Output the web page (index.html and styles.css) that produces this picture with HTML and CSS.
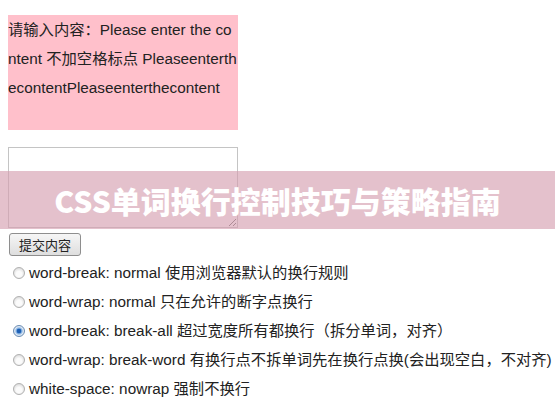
FILE: index.html
```html
<!DOCTYPE html>
<html lang="zh-CN">
<head>
<meta charset="utf-8">
<title>CSS单词换行控制技巧与策略指南</title>
<link rel="stylesheet" href="styles.css">
</head>
<body>
<div class="page">
  <div class="content-box">请输入内容：Please enter the content 不加空格标点 PleaseenterthecontentPleaseenterthecontent</div>
  <textarea class="input-area"></textarea>
  <div class="actions">
    <button class="submit-btn" type="button">提交内容</button>
  </div>
  <ul class="options">
    <li><label><input type="radio" name="wrap" class="radio"> word-break: normal 使用浏览器默认的换行规则</label></li>
    <li><label><input type="radio" name="wrap" class="radio"> word-wrap: normal 只在允许的断字点换行</label></li>
    <li><label><input type="radio" name="wrap" class="radio" checked> word-break: break-all 超过宽度所有都换行（拆分单词，对齐）</label></li>
    <li><label><input type="radio" name="wrap" class="radio"> word-wrap: break-word 有换行点不拆单词先在换行点换(会出现空白，不对齐)</label></li>
    <li><label><input type="radio" name="wrap" class="radio"> white-space: nowrap 强制不换行</label></li>
  </ul>
</div>
<div class="title-banner">CSS单词换行控制技巧与策略指南</div>
</body>
</html>
```

FILE: styles.css
```css
html, body {
  margin: 0;
  padding: 0;
  background: #fff;
}

body {
  font-family: "Liberation Sans", Arial, "Noto Sans CJK TC", sans-serif;
  font-size: 15.3px;
  color: #222;
  overflow: hidden;
}

.page {
  padding: 15px 8px 0 8px;
}

.content-box {
  width: 230px;
  height: 115px;
  background: #ffc0cb;
  line-height: 29px;
  word-break: break-all;
  overflow: hidden;
}

.input-area {
  display: block;
  box-sizing: border-box;
  width: 230px;
  height: 81px;
  margin: 17px 0 0 0;
  border: 1px solid #c4c4c4;
  padding: 2px;
  resize: both;
  font: inherit;
}

.actions {
  margin-top: 5px;
}

.submit-btn {
  box-sizing: border-box;
  width: 72px;
  height: 23px;
  margin-left: 1px;
  padding: 0;
  border: 1px solid #8e8e8e;
  border-radius: 3px;
  background: linear-gradient(#f6f6f6, #dedede);
  font-family: "Noto Sans CJK SC", sans-serif;
  font-size: 13px;
  color: #222;
  line-height: 20px;
}

.options {
  list-style: none;
  margin: 2px 0 0 0;
  padding: 0;
}

.options li {
  height: 29px;
  line-height: 29px;
  white-space: nowrap;
}

.options label {
  display: flex;
  align-items: center;
}

.radio {
  appearance: none;
  -webkit-appearance: none;
  box-sizing: border-box;
  width: 12px;
  height: 12px;
  margin: 0 4px 0 5px;
  border: 1px solid #b0b0b0;
  border-radius: 50%;
  background: radial-gradient(circle at 50% 60%, #fbfbfb 0 35%, #dedede 75%);
  flex: none;
}

.radio:checked {
  border-color: #6a8cb2;
  background: radial-gradient(circle at 50% 50%, #1d5fb4 0 28%, #6fa3dc 36%, #dfe9f5 60%, #c8d6e6 100%);
}

.title-banner {
  position: absolute;
  left: 0;
  top: 171px;
  width: 100%;
  height: 58px;
  background: rgba(214, 160, 176, 0.65);
  color: #fff;
  font-family: "Noto Sans CJK SC", sans-serif;
  font-weight: 900;
  font-size: 30px;
  line-height: 58px;
  text-align: center;
}
```
